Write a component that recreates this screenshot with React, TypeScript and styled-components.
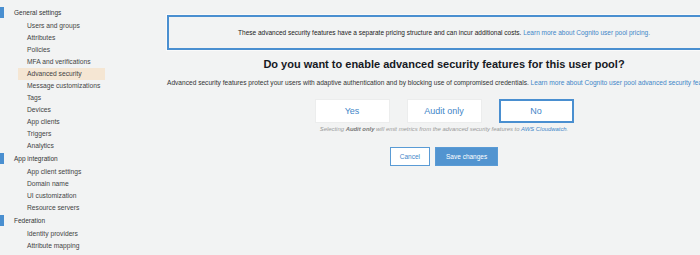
import styled, { createGlobalStyle } from "styled-components";

const GlobalStyle = createGlobalStyle`
    html, body {
        margin: 0;
        padding: 0;
        background: #f2f3f3;
        overflow: hidden;
    }
    body {
        font-family: "Liberation Sans", Arial, sans-serif;
        color: #333;
    }
`

const Page = styled.div`
    display: flex;
    width: 721px;
    height: 255px;
`

const Sidebar = styled.nav`
    width: 110px;
    flex-shrink: 0;
    padding-top: 6px;
`

const SectionHead = styled.div`
    display: flex;
    align-items: center;
    gap: 10px;
    height: 12px;
    margin-bottom: 2px;
    font-size: 6.5px;
    color: #333;
`

const Marker = styled.span`
    width: 4px;
    height: 11px;
    background: #4a8fd0;
`

const NavItem = styled.div<{ active?: boolean }>`
    margin-left: 18px;
    width: 87px;
    height: 12px;
    line-height: 12px;
    padding-left: 9px;
    box-sizing: border-box;
    font-size: 6.7px;
    color: #444;
    background: ${props => props.active ? "#f5e6d3" : "transparent"};
`

const Main = styled.main`
    flex: 1;
    padding: 15px 0 0 57px;
    display: flex;
    flex-direction: column;
    align-items: center;
`

const Notice = styled.div`
    align-self: stretch;
    height: 35px;
    box-sizing: border-box;
    border: 2px solid #4a8fd0;
    box-shadow: 0 0 0 1px #fafafa;
    display: flex;
    align-items: center;
    justify-content: center;
    font-size: 6.5px;
    color: #222;
`

const Link = styled.a`
    color: #3f86c8;
    text-decoration: none;
`

const Heading = styled.h2`
    margin: 8px 0 0;
    font-size: 11px;
    font-weight: bold;
    color: #16191f;
`

const Lead = styled.p`
    align-self: stretch;
    margin: 9px 0 0;
    font-size: 6.6px;
    color: #333;
    white-space: nowrap;
`

const Choices = styled.div`
    display: flex;
    gap: 17px;
    margin-top: 13px;
`

const Choice = styled.button<{ selected?: boolean }>`
    width: 75px;
    height: 24px;
    box-sizing: border-box;
    background: #fff;
    border: ${props => props.selected ? "2px solid #4a8fd0" : "1px solid #eceded"};
    font-family: inherit;
    font-size: 9px;
    color: #3f86c8;
    padding: 0;
`

const Caption = styled.div`
    margin-top: 3px;
    font-size: 5.9px;
    font-style: italic;
    color: #999;

    b {
        color: #777;
    }
`

const Actions = styled.div`
    display: flex;
    gap: 5px;
    margin-top: 15px;
`

const Button = styled.button<{ primary?: boolean }>`
    height: 19px;
    box-sizing: border-box;
    padding: 0 ${props => props.primary ? "10px" : "9px"};
    font-family: inherit;
    font-size: 6.5px;
    border: 1.5px solid #5a9bd5;
    background: ${props => props.primary ? "#5294d0" : "#fff"};
    color: ${props => props.primary ? "#fff" : "#3f86c8"};
`

const sections = [
    {
        title: "General settings",
        items: ["Users and groups", "Attributes", "Policies", "MFA and verifications", "Advanced security",
            "Message customizations", "Tags", "Devices", "App clients", "Triggers", "Analytics"],
    },
    {
        title: "App integration",
        items: ["App client settings", "Domain name", "UI customization", "Resource servers"],
    },
    {
        title: "Federation",
        items: ["Identity providers", "Attribute mapping"],
    },
]

function App() {
    return (
        <>
            <GlobalStyle />
            <Page>
                <Sidebar>
                    {sections.map(section => (
                        <div key={section.title}>
                            <SectionHead><Marker />{section.title}</SectionHead>
                            {section.items.map(item => (
                                <NavItem key={item} active={item === "Advanced security"}>{item}</NavItem>
                            ))}
                        </div>
                    ))}
                </Sidebar>
                <Main>
                    <Notice>
                        <span>These advanced security features have a separate pricing structure and can incur additional costs. <Link href="#">Learn more about Cognito user pool pricing.</Link></span>
                    </Notice>
                    <Heading>Do you want to enable advanced security features for this user pool?</Heading>
                    <Lead>
                        Advanced security features protect your users with adaptive authentication and by blocking use of compromised credentials. <Link href="#">Learn more about Cognito user pool advanced security features.</Link>
                    </Lead>
                    <Choices>
                        <Choice>Yes</Choice>
                        <Choice>Audit only</Choice>
                        <Choice selected>No</Choice>
                    </Choices>
                    <Caption>
                        Selecting <b>Audit only</b> will emit metrics from the advanced security features to <Link href="#">AWS Cloudwatch</Link>.
                    </Caption>
                    <Actions>
                        <Button>Cancel</Button>
                        <Button primary>Save changes</Button>
                    </Actions>
                </Main>
            </Page>
        </>
    )
}

export default App;
